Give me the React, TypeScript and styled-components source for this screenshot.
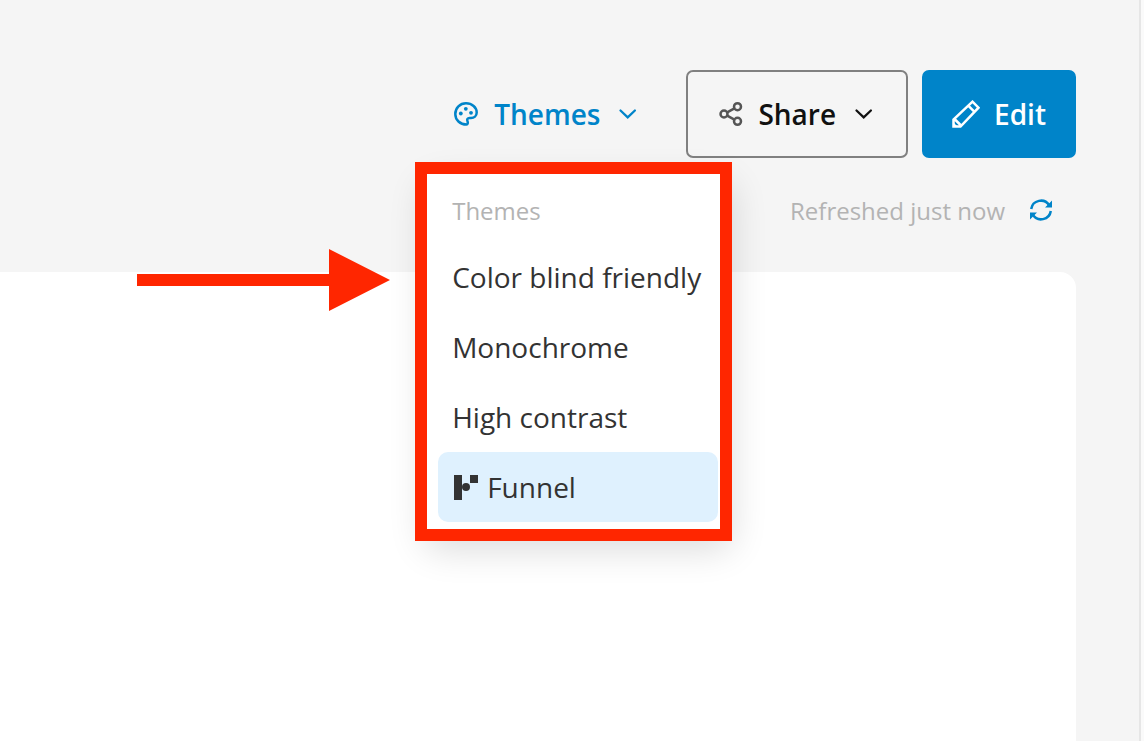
import React from "react";
import styled, { createGlobalStyle, css } from "styled-components";

const GlobalStyle = createGlobalStyle`
  *, *::before, *::after { box-sizing: border-box; }
  body {
    margin: 0;
    background: #f5f5f5;
    font-family: "Open Sans", "Noto Sans", sans-serif;
    color: #333333;
  }
`;

const Page = styled.div`
  display: flex;
  min-height: 100vh;
`;

const Main = styled.main`
  flex: 1;
  display: flex;
  flex-direction: column;
  padding: 70px 63px 0 0;
  min-width: 0;
`;

const Rail = styled.aside`
  width: 5px;
  border-left: 2px solid #e6e6e6;
  background: #fafafa;
`;

const Toolbar = styled.header`
  display: flex;
  justify-content: flex-end;
  gap: 14px;
`;

const ThemePicker = styled.div`
  position: relative;
`;

const variants = {
  link: css`
    color: #0084c9;
    background: transparent;
    border-color: transparent;
  `,
  outline: css`
    color: #111111;
    background: transparent;
    border-color: #808080;
  `,
  primary: css`
    color: #ffffff;
    background: #0084c9;
    border-color: #0084c9;
  `,
};

const Button = styled.button<{ $variant: keyof typeof variants }>`
  display: flex;
  align-items: center;
  gap: 14px;
  height: 88px;
  padding: 0 28px;
  border: 2px solid;
  border-radius: 7px;
  font: 600 28px/38px "Open Sans", "Noto Sans", sans-serif;
  white-space: nowrap;
  cursor: pointer;
  ${({ $variant }) => variants[$variant]}
`;

const Icon = styled.svg`
  display: block;
  flex: none;
  width: 28px;
  height: 28px;
  fill: none;
  stroke: currentColor;
  stroke-width: 2.5;
`;

const Callout = styled.div`
  position: absolute;
  z-index: 2;
  top: 98px;
  left: 2px;
  width: 308px;

  &::after {
    content: "";
    position: absolute;
    inset: -6px 0 -5px -9px;
    border: 12px solid #ff2600;
    pointer-events: none;
  }
`;

const Arrow = styled.svg`
  position: absolute;
  top: 81px;
  right: 342px;
  width: 253px;
  height: 62px;
  fill: #ff2600;
`;

const Menu = styled.div`
  padding: 14px;
  border-radius: 14px;
  background: #ffffff;
  box-shadow: 0 14px 36px rgba(0, 0, 0, 0.14);
`;

const MenuTitle = styled.div`
  padding: 13px 14px 15px;
  color: #b3b3b3;
  font-size: 24px;
  line-height: 32px;
`;

const MenuItem = styled.button<{ $selected?: boolean }>`
  display: flex;
  align-items: center;
  gap: 8px;
  width: 100%;
  height: 70px;
  padding: 0 14px;
  border: 0;
  border-radius: 10px;
  background: ${({ $selected }) => ($selected ? "#dff1fe" : "transparent")};
  color: #333333;
  font: 400 28px/38px "Open Sans", "Noto Sans", sans-serif;
  white-space: nowrap;
  cursor: pointer;
`;

const Status = styled.div`
  display: flex;
  align-items: center;
  justify-content: flex-end;
  gap: 22px;
  height: 114px;
  padding: 0 21px 8px 0;
  color: #b3b3b3;
  font-size: 24px;
  line-height: 32px;
`;

const RefreshButton = styled.button`
  padding: 0;
  border: 0;
  background: none;
  color: #0084c9;
  cursor: pointer;
`;

const Panel = styled.section`
  flex: 1;
  border-top-right-radius: 16px;
  background: #ffffff;
`;

const Chevron = () => (
  <Icon viewBox="0 0 28 28" aria-hidden="true">
    <path d="M6.500 10.500l7.200 6.800 7.200-6.800" strokeLinecap="round" strokeWidth="2.300" />
  </Icon>
);

const PaletteIcon = () => (
  <Icon viewBox="0 0 28 28" aria-hidden="true">
    <path d="M14.500 24.500C8 24.500 3.300 20 3.300 14S8 3.300 14 3.300s10.700 4.300 10.700 9.200c0 3.700-2.700 5.500-5.700 5.500h-1.500c-2 0-2.800 1.500-2 3.200.6 1.500.3 3.300-1 3.300z" />
    <g fill="currentColor" stroke="none">
      <circle cx="8.800" cy="13.500" r="1.900" />
      <circle cx="13.800" cy="8.800" r="1.900" />
      <circle cx="19" cy="12.800" r="1.900" />
    </g>
  </Icon>
);

const ShareIcon = () => (
  <Icon viewBox="0 0 28 28" aria-hidden="true" color="#555555">
    <circle cx="8" cy="14" r="3.500" />
    <circle cx="21.500" cy="6.700" r="3.500" />
    <circle cx="21.500" cy="21.300" r="3.500" />
    <path d="M11.200 12.300l7.200-3.900M11.200 15.700l7.200 3.900" />
  </Icon>
);

const PencilIcon = () => (
  <Icon viewBox="0 0 28 28" aria-hidden="true">
    <path d="M1.500 26.500v-7L20.500 1.700l6 6L8.500 26.500zM16.500 5.800l6 6M2.500 19l6.500 6.500" />
    <path d="M1.500 22.500l4 4h-4z" fill="currentColor" stroke="none" />
  </Icon>
);

const RefreshIcon = () => (
  <Icon viewBox="0 0 28 28" aria-hidden="true">
    <path d="M4.200 12a9.800 9.800 0 0 1 18-3.700M23.800 14a9.800 9.800 0 0 1-18 3.700" />
    <path d="M25 3.500v7h-7zM3 22.500v-7h7z" fill="currentColor" stroke="none" />
  </Icon>
);

const FunnelLogo = () => (
  <svg width="27" height="27" viewBox="0 0 27 27" fill="#333333" aria-hidden="true">
    <path d="M2 1h8v25H2zM18 1h8v8h-8z" />
    <circle cx="14" cy="13" r="4" />
  </svg>
);

const themes = ["Color blind friendly", "Monochrome", "High contrast"];

export default function App() {
  return (
    <Page>
      <GlobalStyle />
      <Main>
        <Toolbar>
          <ThemePicker>
            <Button $variant="link" aria-haspopup="menu" aria-expanded="true">
              <PaletteIcon />
              Themes
              <Chevron />
            </Button>
            <Callout>
              <Menu role="menu" aria-label="Themes">
                <MenuTitle>Themes</MenuTitle>
                {themes.map((name) => (
                  <MenuItem key={name} role="menuitem">
                    {name}
                  </MenuItem>
                ))}
                <MenuItem role="menuitem" $selected>
                  <FunnelLogo />
                  Funnel
                </MenuItem>
              </Menu>
              <Arrow viewBox="0 0 253 62" aria-hidden="true">
                <path d="M0 25h192V0l61 31-61 31V37H0z" />
              </Arrow>
            </Callout>
          </ThemePicker>
          <Button $variant="outline" aria-haspopup="menu">
            <ShareIcon />
            Share
            <Chevron />
          </Button>
          <Button $variant="primary">
            <PencilIcon />
            Edit
          </Button>
        </Toolbar>
        <Status>
          Refreshed just now
          <RefreshButton aria-label="Refresh">
            <RefreshIcon />
          </RefreshButton>
        </Status>
        <Panel />
      </Main>
      <Rail />
    </Page>
  );
}
